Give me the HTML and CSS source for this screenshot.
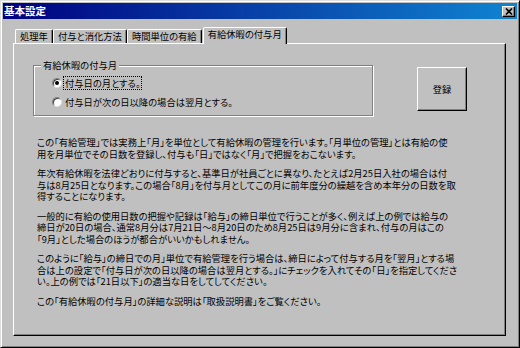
FILE: index.html
```html
<!DOCTYPE html>
<html lang="ja">
<head>
    <meta charset="UTF-8">
    <title>基本設定</title>
    <link rel="stylesheet" href="styles.css">
</head>
<body>
    <div class="window">
        <div class="titlebar">
            <span class="title">基本設定</span>
            <span class="close">
                <svg width="8" height="7" viewBox="0 0 8 7"><path d="M1 0.5l6 6M7 0.5l-6 6" stroke="#000" stroke-width="1.6" fill="none"/></svg>
            </span>
        </div>
        <div class="dialog-body">
            <div class="tabs">
                <div class="tab">処理年</div>
                <div class="tab">付与と消化方法</div>
                <div class="tab">時間単位の有給</div>
                <div class="tab active">有給休暇の付与月</div>
            </div>
            <div class="panel">
                <div class="top-row">
                    <fieldset class="group">
                        <legend>有給休暇の付与月</legend>
                        <div class="radio"><span class="dot checked"></span><span class="focus">付与日の月とする。</span></div>
                        <div class="radio"><span class="dot"></span><span class="label">付与日が次の日以降の場合は翌月とする。</span></div>
                    </fieldset>
                    <button class="btn">登録</button>
                </div>
                <div class="notes">
                    <p>この「有給管理」では実務上「月」を単位として有給休暇の管理を行います。「月単位の管理」とは有給の使<br>用を月単位でその日数を登録し、付与も「日」ではなく「月」で把握をおこないます。</p>
                    <p>年次有給休暇を法律どおりに付与すると、基準日が社員ごとに異なり、たとえば2月25日入社の場合は付<br>与は8月25日となります。この場合「8月」を付与月としてこの月に前年度分の繰越を含め本年分の日数を取<br>得することになります。</p>
                    <p>一般的に有給の使用日数の把握や記録は「給与」の締日単位で行うことが多く、例えば上の例では給与の<br>締日が20日の場合、通常8月分は7月21日～8月20日のため8月25日は9月分に含まれ、付与の月はこの<br>「9月」とした場合のほうが都合がいいかもしれません。</p>
                    <p>このように「給与」の締日での月」単位で有給管理を行う場合は、締日によって付与する月を「翌月」とする場<br>合は上の設定で「付与日が次の日以降の場合は翌月とする。」にチェックを入れてその「日」を指定してくださ<br>い。上の例では「21日以下」の適当な日をしてしてください。</p>
                    <p>この「有給休暇の付与月」の詳細な説明は「取扱説明書」をご覧ください。</p>
                </div>
            </div>
        </div>
    </div>
</body>
</html>
```

FILE: styles.css
```css
* {
    box-sizing: border-box;
}
body {
    margin: 0;
    font-family: "Noto Sans CJK JP", sans-serif;
    font-size: 9.3px;
    font-feature-settings: "palt";
    color: #000;
}
.window {
    width: 520px;
    height: 348px;
    background: #c0c0c0;
    border: 1px solid;
    border-color: #dfdfdf #000 #000 #dfdfdf;
    box-shadow: inset 1px 1px #fff, inset -1px -1px #808080;
    padding: 2px;
    display: flex;
    flex-direction: column;
}
.titlebar {
    height: 16px;
    background: linear-gradient(to right, #000080, #1084d0);
    display: flex;
    align-items: center;
    justify-content: space-between;
    padding: 0 2px 0 1px;
}
.title {
    color: #fff;
    font-weight: bold;
    font-size: 10.5px;
    line-height: 1;
}
.close {
    width: 13px;
    height: 11px;
    background: #c0c0c0;
    border: 1px solid;
    border-color: #fff #000 #000 #fff;
    box-shadow: inset -1px -1px #808080;
    display: flex;
    align-items: center;
    justify-content: center;
}
.dialog-body {
    flex: 1;
    padding: 8px 11px 9px 10px;
    display: flex;
    flex-direction: column;
}
.tabs {
    display: flex;
    align-items: flex-end;
    padding-left: 2px;
}
.tab {
    height: 14px;
    padding: 0 4px;
    display: flex;
    align-items: center;
    line-height: 1;
    border: 1px solid;
    border-bottom: 0;
    border-color: #fff #000 transparent #fff;
    border-radius: 2px 2px 0 0;
    box-shadow: inset -1px 0 #808080;
}
.tab.active {
    height: 17px;
    margin-left: 1px;
    margin-bottom: -1px;
    padding-bottom: 2px;
    background: #c0c0c0;
    position: relative;
    z-index: 1;
}
.panel {
    flex: 1;
    border: 1px solid;
    border-color: #fff #000 #000 #fff;
    box-shadow: inset -1px -1px #808080;
    padding: 15px 0 0 19px;
}
.top-row {
    display: flex;
    align-items: flex-start;
}
.group {
    width: 340px;
    margin: 0;
    padding: 2px 0 4px 0;
    border: 1px solid #808080;
    box-shadow: inset 1px 1px #fff, 1px 1px #fff;
}
.group legend {
    margin-left: 7px;
    padding: 0 2px;
    line-height: 12px;
    background: #c0c0c0;
}
.radio {
    height: 19px;
    margin-left: 18px;
    display: flex;
    align-items: center;
    line-height: 12px;
}
.dot {
    width: 10px;
    height: 10px;
    margin-right: 2px;
    border-radius: 50%;
    background: #fff;
    border: 1px solid;
    border-color: #808080 #dfdfdf #dfdfdf #808080;
    box-shadow: inset 1px 1px #404040;
    display: flex;
    align-items: center;
    justify-content: center;
}
.dot.checked::after {
    content: "";
    width: 4px;
    height: 4px;
    border-radius: 50%;
    background: #000;
}
.focus {
    outline: 1px dotted #000;
    padding: 0 1px;
}
.label {
    padding: 0 1px;
}
.btn {
    width: 50px;
    height: 44px;
    margin: 8px 0 0 44px;
    background: #c0c0c0;
    border: 1px solid;
    border-color: #fff #000 #000 #fff;
    box-shadow: inset -1px -1px #808080;
    font-family: inherit;
    font-size: 9.3px;
    font-feature-settings: "palt";
    color: #000;
    padding: 0;
}
.notes {
    margin: 21px 0 0 4px;
    line-height: 11.5px;
    white-space: nowrap;
}
.notes p {
    margin: 0 0 8px;
}
```
